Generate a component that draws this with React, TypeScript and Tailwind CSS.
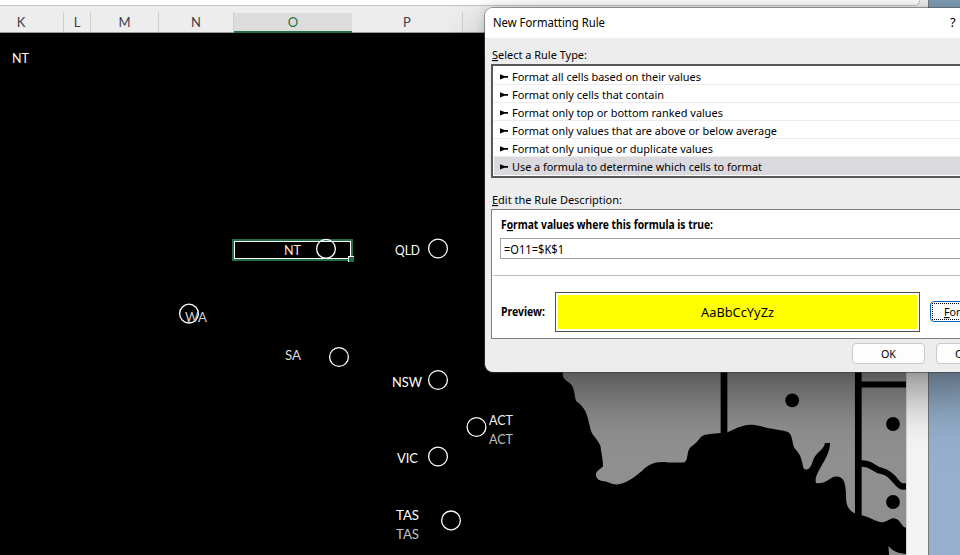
import React from "react";

const columns = [
  { name: "K", box: "w-[64px] pr-[21px]" },
  { name: "L", box: "w-[27px]" },
  { name: "M", box: "w-[68px]" },
  { name: "N", box: "w-[75px]" },
  { name: "O", box: "w-[118px]", active: true },
  { name: "P", box: "w-[111px]" },
  { name: "", box: "w-[30px]" },
];

const rules = [
  { text: "Format all cells based on their values", w: 189 },
  { text: "Format only cells that contain", w: 152 },
  { text: "Format only top or bottom ranked values", w: 211 },
  { text: "Format only values that are above or below average", w: 265 },
  { text: "Format only unique or duplicate values", w: 201 },
  { text: "Use a formula to determine which cells to format", w: 250 },
];

/* Text drawn at a fixed advance width so that it lines up at any hinting. */
function Fit({ w, size, bold, y = 13, children }: { w: number; size: number; bold?: boolean; y?: number; children: React.ReactNode }) {
  return (
    <svg className="block h-[18px] shrink-0 overflow-visible" width={w}>
      <text x="0" y={y} textLength={w} lengthAdjust="spacingAndGlyphs" fontSize={size} fontWeight={bold ? 700 : 400} fill="currentColor">
        {children}
      </text>
    </svg>
  );
}

const labels = [
  { t: "NT", at: "left-[12px] top-[50px]", w: 17, c: "text-white" },
  { t: "NT", at: "left-[284px] top-[242px]", w: 17, c: "text-[#ffe9cf]" },
  { t: "QLD", at: "left-[395px] top-[242px]", w: 25, c: "text-white" },
  { t: "WA", at: "left-[185px] top-[309px]", w: 22, c: "text-[#c9c9c9]" },
  { t: "SA", at: "left-[285px] top-[347px]", w: 16, c: "text-[#dedede]" },
  { t: "NSW", at: "left-[392px] top-[374px]", w: 30, c: "text-white" },
  { t: "ACT", at: "left-[489px] top-[412px]", w: 24, c: "text-white" },
  { t: "ACT", at: "left-[489px] top-[431px]", w: 24, c: "text-[#c4c4c4]" },
  { t: "VIC", at: "left-[397px] top-[450px]", w: 21, c: "text-white" },
  { t: "TAS", at: "left-[396px] top-[507px]", w: 23, c: "text-white" },
  { t: "TAS", at: "left-[396px] top-[526px]", w: 23, c: "text-[#c4c4c4]" },
];

const circles = [
  [438, 248.5], [189, 313.6], [339, 357],
  [438, 380], [476.5, 427], [438, 456.5], [451, 520.4],
];

function MapDrawing() {
  return (
    <svg className="absolute left-0 top-0" width="906" height="555" viewBox="0 0 906 555">
      <path
        fill="#8f8f8f"
        d="M560 340H906V527.5C902.5 528 900.5 520.5 896.5 519C892 516.5 889 520.5 884 522C878 523.5 870 517 862.5 515.5L855 513.5C846 509 846 501 846 495C845.500 485 845 477 837 476.500C830 476 826 485 816 483C813 473 830 459 830 443H825C823.500 451 815 452 812.500 462C810.500 469 807 471 803.500 468.500C802 461 801 455 796 450C791 445 794 436 788 432C781 430 769 429 760 426C750 423.500 745 425 738 427.500L727 432.500L720 433C709 434.500 704 433.500 700 438C695 446 690 445 688 452C687 458 687 462 683 462.500H668C656 461 649 464 642 471C632 479 625 484 617 484.500C609 484 608 481 602 481C596 480 594 474 598 470.500L603 466.500C603 458 601 453 600.500 446C597 438 591 435 590 427C587 414 586 408 576 401C574 394 575 387 569 382.500C563 379 562 375 563 373Z"
      />
      <path fill="#8f8f8f" d="M888.500 546C894 553 900 553 906 554V555H889Z" />
      <path d="M724 360V434M858.300 360V517" stroke="#000" strokeWidth="6.7" />
      <path d="M858 384.500H906" stroke="#000" strokeWidth="6" />
      <path d="M861 463.500C873 463 873 470 882 471C893 473 896 485 902 486.500H907" fill="none" stroke="#000" strokeWidth="6.3" />
      <g fill="#000">
        <circle cx="792.2" cy="400.3" r="6.9" />
        <circle cx="893" cy="424" r="6.9" />
        <circle cx="893" cy="502" r="6.9" />
      </g>
      <g fill="none" stroke="#fff" strokeWidth="1.3">
        {circles.map(([x, y]) => (
          <circle key={`${x}-${y}`} cx={x} cy={y} r="9.4" />
        ))}
      </g>
    </svg>
  );
}

function ColumnHeader() {
  return (
    <div className="flex h-[33px] flex-col font-['Lato','Liberation_Sans',sans-serif]">
      <div className="h-[6px] w-[920px] rounded-br-[5px] border-b border-r border-[#c6c6c6] bg-white" />
      <div className="flex h-[27px] items-end border-b border-[#9a9a9a] bg-[#ededed]">
        {columns.map((c) => (
          <div
            key={c.name}
            className={`relative flex h-5 shrink-0 items-center justify-center text-[13px] ${c.box} ${
              c.active
                ? "-mb-px border-b-2 border-[#1f7145] bg-[#dcdcdc] text-[#1f7145]"
                : "border-r border-[#cecece] text-[#3f4048]"
            }`}
          >
            <span className="pt-[2px]">{c.name}</span>
          </div>
        ))}
      </div>
    </div>
  );
}

function RuleList() {
  return (
    <div className="ml-[6px] h-[114px] w-[500px] border-2 border-[#55575d] bg-white p-px">
      {rules.map((r, i) => (
        <div
          key={r.text}
          className={`flex h-[18px] items-center border-b pl-[6px] ${i === 5 ? "border-[#dad9de] bg-[#dad9de]" : "border-[#ececec]"}`}
        >
          <svg className="mr-[4px] mt-[3px] shrink-0" width="8" height="6" viewBox="0 0 8 6">
            <path d="M0 .2L4.500 2.100H8V3.700H4.500L0 5.600Z" fill="#000" />
          </svg>
          <Fit w={r.w} size={11.5} y={14}>{r.text}</Fit>
        </div>
      ))}
    </div>
  );
}

function Dialog() {
  return (
    <section className="absolute left-[485px] top-[8px] h-[364px] w-[520px] overflow-visible rounded-lg bg-[#ededed] font-['Noto_Sans','Open_Sans',sans-serif] text-black shadow-[0_24px_50px_rgba(0,0,0,0.4),0_0_0_1px_rgba(90,90,90,0.55),0_0_12px_rgba(0,0,0,0.15)]">
      <header className="flex h-[30px] items-center rounded-t-lg bg-white pl-[8px]">
        <Fit w={112} size={12}>New Formatting Rule</Fit>
        <span className="ml-[345px] text-[13px]">?</span>
      </header>
      <div className="h-[26px] pl-[7px] pt-[8px]">
        <Fit w={95} size={11.5}><tspan textDecoration="underline">S</tspan>elect a Rule Type:</Fit>
      </div>
      <RuleList />
      <div className="h-[31px] pl-[7px] pt-[13px]">
        <Fit w={130} size={11.5}><tspan textDecoration="underline">E</tspan>dit the Rule Description:</Fit>
      </div>
      <div className="ml-[6px] flex h-[130px] w-[500px] flex-col border border-[#7b7c86] bg-white">
        <div className="h-[28px] pl-[9px] pt-[6px]">
          <Fit w={212} size={11.5} bold>F<tspan textDecoration="underline">o</tspan>rmat values where this formula is true:</Fit>
        </div>
        <div className="ml-[8px] flex h-[21px] items-center border border-[#a0a1ab] pl-[3px]">
          <Fit w={60} size={12} y={14}>=O11=$K$1</Fit>
        </div>
        <div className="ml-px mt-[16px] h-px bg-[#bdbdbf]" />
        <div className="mt-[16px] flex h-10 items-center pl-[9px]">
          <Fit w={44} size={11.5} bold>Preview:</Fit>
          <div className="ml-[10px] h-10 w-[365px] shrink-0 border border-[#505050] p-[2px]">
            <div className="flex h-full items-center justify-center bg-[#ffff00]">
              <Fit w={73} size={13} y={14}>AaBbCcYyZz</Fit>
            </div>
          </div>
          <button className="-mt-px ml-[10px] flex h-[21px] w-[73px] shrink-0 items-center rounded-[4px] border border-[#0867c1] bg-[#fdfdfd] p-px">
            <span className="flex h-full w-full items-center border border-dotted border-black pl-[11px]">
              <Fit w={45} size={11.5}><tspan textDecoration="underline">F</tspan>ormat...</Fit>
            </span>
          </button>
        </div>
      </div>
      <footer className="flex gap-[11px] pl-[367px] pt-[4px]">
        <button className="flex h-[21px] w-[73px] shrink-0 items-center justify-center rounded-[4px] border border-[#c9c9c9] bg-[#fdfdfd]">
          <Fit w={15} size={11.5}>OK</Fit>
        </button>
        <button className="flex h-[21px] w-[73px] shrink-0 items-center rounded-[4px] border border-[#c9c9c9] bg-[#fdfdfd] pl-[18px]">
          <Fit w={36} size={11.5}>Cancel</Fit>
        </button>
      </footer>
    </section>
  );
}

export default function App() {
  return (
    <main className="relative flex h-[555px] w-[960px] overflow-hidden bg-[#98b2cd]">
      <div className="w-[929px] shrink-0 border-r border-[#777] bg-[#f3f3f3]">
        <ColumnHeader />
        <div className="h-[522px] w-[907px] border-r border-[#d5d5d5] bg-black" />
      </div>
      <div className="flex-1 bg-linear-to-b from-[#7fa0ba] via-[#8fadc7] to-[#98b0ce]" />
      <MapDrawing />
      <div className="absolute left-[232px] top-[239px] h-[22px] w-[121px] border-2 border-[#1f7145]">
        <div className="h-full w-full border border-white" />
        <div className="absolute -bottom-[3px] -right-[3px] h-[6px] w-[6px] border-l border-t border-white bg-[#1f7145]" />
      </div>
      <svg className="absolute left-[315px] top-[238px]" width="22" height="22">
        <circle cx="11" cy="10.800" r="9.4" fill="none" stroke="#fff" strokeWidth="1.3" />
      </svg>
      {labels.map((l) => (
        <div key={l.at} className={`absolute font-['Lato','Liberation_Sans',sans-serif] ${l.at} ${l.c}`}>
          <Fit w={l.w} size={13} y={13}>{l.t}</Fit>
        </div>
      ))}
      <Dialog />
    </main>
  );
}
